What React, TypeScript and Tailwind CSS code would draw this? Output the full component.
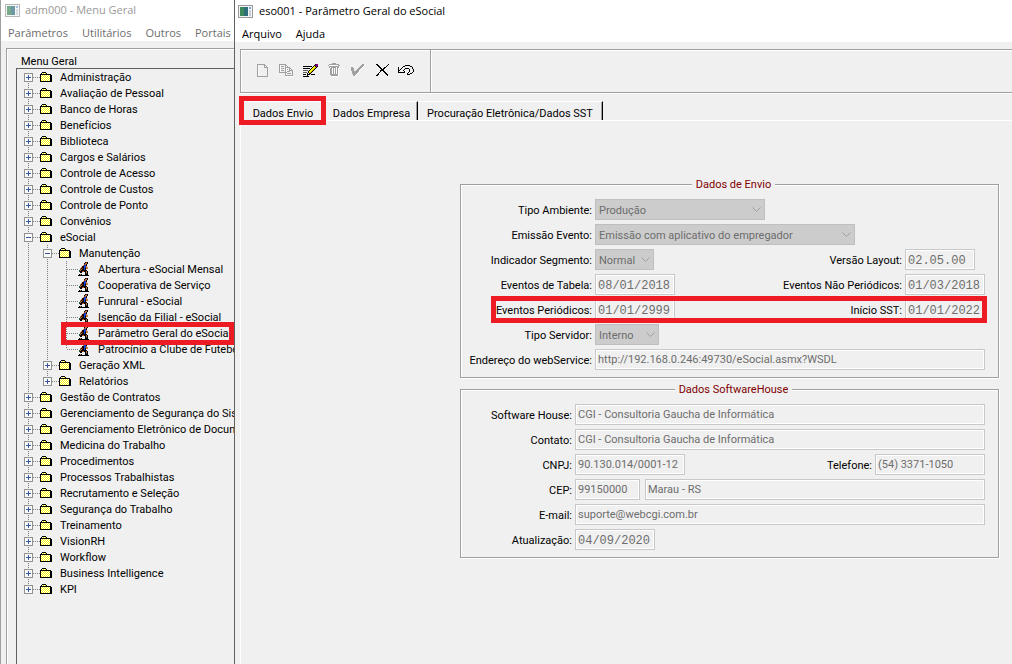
import { useState } from 'react'
import type { ReactNode } from 'react'
import clsx from 'clsx'

const PALETTE: Record<string, string> = {
  k: '#000000',
  g: '#a0a0a0',
  d: '#606060',
  w: '#ffffff',
  y: '#ffff00',
  e: '#c8b400',
  o: '#c87840',
  b: '#1040d0',
  r: '#a02010',
  n: '#205030',
  m: '#800080',
}

const FOLDER = [
  '..kkkk......',
  '.kwywyk.....',
  'kkkkkkkkkkk.',
  'kwywywywywkk',
  'kywywywywykk',
  'kwywywywywkk',
  'kywywywywykk',
  'kwywywywywkk',
  'kywywywywykk',
  'kkkkkkkkkkkk',
]

const RUNNER = [
  '.......krk..',
  '......kook..',
  '......rok...',
  '.....obbk...',
  '....kkbbo...',
  '...okkbboo..',
  '..okrkbkoo..',
  '..nokkbk....',
  '.nokkkkkk...',
  '.nkkrokkok..',
  '..kk...kok..',
  '.......knk..',
  '.kok...kkk..',
  'kkkkkkkkkkk.',
]

const ICON_NEW = [
  'gggggggg...',
  'gw.....gg..',
  'gw.....gwg.',
  'gw.....gggg',
  'gw........g',
  'gw........g',
  'gw........g',
  'gw........g',
  'gw........g',
  'gw........g',
  'gw........g',
  'gw........g',
  'ggggggggggg',
]

const ICON_COPY = [
  'ggggggg........',
  'gw....gg.......',
  'gwggg.gwg......',
  'gw....ggggg....',
  'gwggg.gw..gg...',
  'gw....gwg.gwg..',
  'gwggg.gw..gggg.',
  'gw....gwggg..g.',
  'ggggggggw....g.',
  '......gwgggg.g.',
  '......gw.....g.',
  '......gggggggg.',
  '.......wwwwwww.',
]

const ICON_EDIT = [
  '............kmm',
  '...........kmmm',
  'kkkkkkkkk.kykmk',
  '.........kyyek.',
  'kkkkkkk.kyyek..',
  '.......kyyek...',
  'ddddd.kyyek....',
  '.....kyyek.....',
  'dddd.kyek......',
  '....kwkk.......',
  'kkk.kkk.kkkk...',
  '....k..........',
  'kkkkkk.........',
]

const ICON_TRASH = [
  '....gggg.....',
  '.gggggggggg..',
  'gwwwwwwwwwgg.',
  '.ggggggggggw.',
  '.gwgggggwggw.',
  '..ggwgwgwgw..',
  '..ggwgwgwgw..',
  '..ggwgwgwgw..',
  '..ggwgwgwgw..',
  '..ggwgwgwgw..',
  '..ggwgwgwgw..',
  '..ggggggggw..',
  '...gggggggw..',
  '....wwwwww...',
]

const ICON_CHECK = [
  '...........gg.',
  '..........gggw',
  '.........gggw.',
  'gg......gggw..',
  'ggg....gggw...',
  'ggg...gggw....',
  'ggg..gggw.....',
  '.gggggggw.....',
  '.ggggggw......',
  '.gggggw.......',
  '..gggw........',
  '..ggw.........',
]

const ICON_CANCEL = [
  'kk..........k',
  '.kk........k.',
  '..kk......k..',
  '...kk...kk...',
  '....kk.kk....',
  '.....kkk.....',
  '....kkkk.....',
  '....k..kk....',
  '...k....kk...',
  '..k......kk..',
  '.kk.......kk.',
  'kk.........k.',
]

const ICON_UNDO = [
  '.......kkkkk....',
  '.....kk.....kk..',
  'k...k.........k.',
  'k..k...kkkk...k.',
  'k.k...k....k...k',
  'kk...k.....k...k',
  'k.....k....k...k',
  'kkkkkkk...k...k.',
  '.........k..kk..',
  '.........kkk....',
]

function PixelIcon({ rows, className }: { rows: string[]; className?: string }) {
  const w = Math.max(...rows.map(r => r.length))
  return (
    <svg width={w} height={rows.length} shapeRendering="crispEdges" className={className} aria-hidden="true">
      {rows.map((row, y) =>
        row.split('').map((c, x) =>
          c === '.' ? null : <rect key={`${x}-${y}`} x={x} y={y} width="1" height="1" fill={PALETTE[c]} />
        )
      )}
    </svg>
  )
}

function WindowIcon({ faded }: { faded?: boolean }) {
  return (
    <svg width="15" height="13" shapeRendering="crispEdges" className={clsx('shrink-0', faded && 'opacity-70')} aria-hidden="true">
      <rect width="15" height="13" fill="#9a9a9a" />
      <rect x="1" y="1" width="13" height="11" fill="#f4f4f4" />
      <rect x="2" y="2" width="8" height="9" fill="#2f6f7c" />
      <rect x="2" y="2" width="4" height="9" fill="#3d8a5c" />
      <rect x="11" y="2" width="2" height="2" fill="#7ba7d8" />
      <rect x="11" y="5" width="2" height="6" fill="#c8d0da" />
    </svg>
  )
}

type TreeNode = {
  label: string
  leaf?: boolean
  marked?: boolean
  children?: TreeNode[]
}

const TREE: TreeNode[] = [
  { label: 'Administração' },
  { label: 'Avaliação de Pessoal' },
  { label: 'Banco de Horas' },
  { label: 'Benefícios' },
  { label: 'Biblioteca' },
  { label: 'Cargos e Salários' },
  { label: 'Controle de Acesso' },
  { label: 'Controle de Custos' },
  { label: 'Controle de Ponto' },
  { label: 'Convênios' },
  {
    label: 'eSocial',
    children: [
      {
        label: 'Manutenção',
        children: [
          { label: 'Abertura - eSocial Mensal', leaf: true },
          { label: 'Cooperativa de Serviço', leaf: true },
          { label: 'Funrural - eSocial', leaf: true },
          { label: 'Isenção da Filial - eSocial', leaf: true },
          { label: 'Parâmetro Geral do eSocial', leaf: true, marked: true },
          { label: 'Patrocínio a Clube de Futebol', leaf: true },
        ],
      },
      { label: 'Geração XML' },
      { label: 'Relatórios' },
    ],
  },
  { label: 'Gestão de Contratos' },
  { label: 'Gerenciamento de Segurança do Sistema' },
  { label: 'Gerenciamento Eletrônico de Documentos' },
  { label: 'Medicina do Trabalho' },
  { label: 'Procedimentos' },
  { label: 'Processos Trabalhistas' },
  { label: 'Recrutamento e Seleção' },
  { label: 'Segurança do Trabalho' },
  { label: 'Treinamento' },
  { label: 'VisionRH' },
  { label: 'Workflow' },
  { label: 'Business Intelligence' },
  { label: 'KPI' },
]

// one 19px column of the tree: dotted guides plus the +/- box
function Guide({ up, down, across, box }: { up?: boolean; down?: boolean; across?: boolean; box?: 'plus' | 'minus' }) {
  return (
    <svg width="19" height="16" shapeRendering="crispEdges" className="shrink-0" aria-hidden="true">
      <g stroke="#808080" strokeDasharray="1 1">
        {up && <line x1="7.5" y1="0" x2="7.5" y2="8" />}
        {down && <line x1="7.5" y1="8" x2="7.5" y2="16" />}
        {across && <line x1="8" y1="8.5" x2="19" y2="8.5" />}
      </g>
      {box && (
        <>
          <rect x="3.5" y="4.5" width="8" height="8" fill="#fafafa" stroke="#919191" />
          <line x1="5" y1="8.5" x2="10" y2="8.5" stroke="#3a56a0" />
          {box === 'plus' && <line x1="7.5" y1="6" x2="7.5" y2="11" stroke="#3a56a0" />}
        </>
      )}
    </svg>
  )
}

function Branch({ nodes, trail = [] }: { nodes: TreeNode[]; trail?: boolean[] }) {
  return (
    <ul>
      {nodes.map((n, i) => {
        const last = i === nodes.length - 1
        return (
          <li key={n.label}>
            <div className="relative flex h-4 items-center whitespace-nowrap">
              {trail.map((line, j) => (
                <Guide key={j} up={line} down={line} />
              ))}
              <Guide
                up={trail.length > 0 || i > 0}
                down={!last}
                across
                box={n.leaf ? undefined : n.children ? 'minus' : 'plus'}
              />
              <span className="w-5 shrink-0">
                <PixelIcon rows={n.leaf ? RUNNER : FOLDER} />
              </span>
              <span className="pt-0.5">{n.label}</span>
              {n.marked && (
                <span className="absolute -top-[3px] -bottom-1 right-0 left-10 z-10 border-5 border-[#ed1c24]" />
              )}
            </div>
            {n.children && <Branch nodes={n.children} trail={[...trail, !last]} />}
          </li>
        )
      })}
    </ul>
  )
}

function Field({ id, value, mono, className }: { id: string; value: string; mono?: boolean; className?: string }) {
  return (
    <input
      id={id}
      disabled
      defaultValue={value}
      className={clsx(
        'h-[21px] min-w-0 border border-[#c8c8c8] bg-[#f0f0f0] px-0.5 text-[#6d6d6d] shadow-[inset_0_0_0_1px_#fff]',
        mono && 'pt-0.5 font-["Liberation_Mono",monospace] text-xs',
        className
      )}
    />
  )
}

function Combo({ id, value, className }: { id: string; value: string; className?: string }) {
  return (
    <div className={clsx('relative', className)}>
      <select
        id={id}
        disabled
        className="block h-[21px] w-full appearance-none border border-[#bfbfbf] bg-[#cccccc] pt-0.5 pl-[3px] text-[#6d6d6d] opacity-100"
      >
        <option>{value}</option>
      </select>
      <svg width="9" height="5" className="pointer-events-none absolute top-2 right-1" aria-hidden="true">
        <path d="M0.5 0.5 L4.5 4.5 L8.5 0.5" fill="none" stroke="#a0a0a0" />
      </svg>
    </div>
  )
}

function Group({ title, children }: { title: string; children: ReactNode }) {
  return (
    <fieldset className="min-w-0 border border-[#a0a0a0] pb-[7px] pl-2 shadow-[1px_1px_0_#fff,inset_1px_1px_0_#fff]">
      <legend className="mx-auto bg-[#f0f0f0] px-1 pt-0.5 leading-4 text-[#800000]">{title}</legend>
      <div className="flex flex-col gap-1 pt-[6px] pr-[13px]">{children}</div>
    </fieldset>
  )
}

function Row({ htmlFor, label, narrow, children }: { htmlFor: string; label: string; narrow?: boolean; children: ReactNode }) {
  return (
    <div className="relative flex items-center gap-[3px] whitespace-nowrap">
      <label htmlFor={htmlFor} className={clsx('shrink-0 pt-0.5 text-right', narrow ? 'w-[103px]' : 'w-[123px]')}>
        {label}
      </label>
      {children}
    </div>
  )
}

const TOOLS = [
  { name: 'Novo', rows: ICON_NEW, off: true },
  { name: 'Copiar', rows: ICON_COPY, off: true },
  { name: 'Editar', rows: ICON_EDIT },
  { name: 'Excluir', rows: ICON_TRASH, off: true },
  { name: 'Confirmar', rows: ICON_CHECK, off: true },
  { name: 'Cancelar', rows: ICON_CANCEL },
  { name: 'Desfazer', rows: ICON_UNDO },
]

const TABS = [
  { label: 'Dados Envio', width: 'w-[86px]' },
  { label: 'Dados Empresa', width: 'w-[92px]' },
  { label: 'Procuração Eletrônica/Dados SST', width: 'w-[185px]' },
]

export default function App() {
  const [tab, setTab] = useState(0)

  return (
    <div className="flex min-h-screen bg-[#f0f0f0] font-[Roboto,sans-serif] text-[11px] leading-4 text-black">
      {/* Menu Geral */}
      <aside className="flex w-[234px] shrink-0 flex-col overflow-hidden border-l border-[#a0a0a0]">
        <header className='h-[41px] bg-white font-["Open_Sans",sans-serif] text-[#6d6d6d]'>
          <div className="flex h-5 items-center gap-[5px] pl-1 text-[#999999]">
            <WindowIcon faded />
            <span>adm000 - Menu Geral</span>
          </div>
          <nav className="flex gap-3.5 pt-[5px] pl-[7px]">
            <button>Parâmetros</button>
            <button>Utilitários</button>
            <button>Outros</button>
            <button>Portais</button>
          </nav>
        </header>
        <div className="mt-[7px] ml-[5px] flex grow flex-col border-t border-l border-[#a0a0a0] shadow-[inset_1px_1px_0_#fff]">
          <h2 className="h-[19px] pt-[5px] pl-[14px]">Menu Geral</h2>
          <div className="ml-[9px] grow border-t border-l border-[#606060] pl-1">
            <Branch nodes={TREE} />
          </div>
        </div>
      </aside>

      {/* Parâmetro Geral */}
      <main className="flex min-w-0 grow flex-col border-l border-[#606060]">
        <header className='h-[42px] bg-white font-["Open_Sans",sans-serif]'>
          <div className="flex h-[22px] items-center gap-1.5 pl-[3px]">
            <WindowIcon />
            <span>eso001 - Parâmetro Geral do eSocial</span>
          </div>
          <nav className="flex gap-3.5 pt-1 pl-[7px]">
            <button>Arquivo</button>
            <button>Ajuda</button>
          </nav>
        </header>

        <div className="mt-[7px] ml-[5px] flex h-11 border-y border-l border-[#a0a0a0] shadow-[inset_1px_1px_0_#fff,0_1px_0_#fff]">
          <div className="flex w-[190px] items-center border-r border-[#a0a0a0] pb-0.5 pl-[9px] shadow-[1px_0_0_#fff]">
            {TOOLS.map(t => (
              <button key={t.name} aria-label={t.name} disabled={t.off} className="flex h-6 w-6 items-center justify-center">
                <PixelIcon rows={t.rows} />
              </button>
            ))}
          </div>
        </div>

        <div role="tablist" className="mt-2 ml-[5px] flex">
          {TABS.map((t, i) => (
            <button
              key={t.label}
              role="tab"
              aria-selected={tab === i}
              onClick={() => setTab(i)}
              className={clsx(
                'relative h-[19px] border-t border-t-white pt-1 whitespace-nowrap',
                t.width,
                i > 0 && 'border-r border-r-black shadow-[inset_-1px_0_0_#a0a0a0]'
              )}
            >
              {t.label}
              {i === 0 && <span className="absolute -top-1.5 right-0 -bottom-[5px] -left-px z-10 border-5 border-[#ed1c24]" />}
            </button>
          ))}
        </div>

        <section role="tabpanel" className="ml-[5px] grow border-t border-l border-white">
          <div className="mt-[54px] mr-[13px] ml-auto flex max-w-[539px] flex-col gap-0.5">
            <Group title="Dados de Envio">
              <Row htmlFor="ambiente" label="Tipo Ambiente:">
                <Combo id="ambiente" value="Produção" className="w-[170px]" />
              </Row>
              <Row htmlFor="emissao" label="Emissão Evento:">
                <Combo id="emissao" value="Emissão com aplicativo do empregador" className="w-[260px]" />
              </Row>
              <Row htmlFor="segmento" label="Indicador Segmento:">
                <Combo id="segmento" value="Normal" className="w-[59px]" />
                <label htmlFor="versao" className="ml-auto pt-0.5">Versão Layout:</label>
                <div className="flex w-20">
                  <Field id="versao" value="02.05.00" mono className="w-[70px]" />
                </div>
              </Row>
              <Row htmlFor="tabela" label="Eventos de Tabela:">
                <Field id="tabela" value="08/01/2018" mono className="w-20" />
                <label htmlFor="naoPeriodicos" className="ml-auto pt-0.5">Eventos Não Periódicos:</label>
                <Field id="naoPeriodicos" value="01/03/2018" mono className="w-20" />
              </Row>
              <Row htmlFor="periodicos" label="Eventos Periódicos:">
                <Field id="periodicos" value="01/01/2999" mono className="w-20" />
                <label htmlFor="sst" className="ml-auto pt-0.5">Início SST:</label>
                <Field id="sst" value="01/01/2022" mono className="w-20" />
                <span className="absolute -inset-y-[3px] -right-0.5 left-[22px] border-5 border-[#ed1c24]" />
              </Row>
              <Row htmlFor="servidor" label="Tipo Servidor:">
                <Combo id="servidor" value="Interno" className="w-16" />
              </Row>
              <Row htmlFor="webservice" label="Endereço do webService:">
                <Field id="webservice" value="http://192.168.0.246:49730/eSocial.asmx?WSDL" className="grow" />
              </Row>
            </Group>

            <Group title="Dados SoftwareHouse">
              <Row htmlFor="house" label="Software House:" narrow>
                <Field id="house" value="CGI - Consultoria Gaucha de Informática" className="grow" />
              </Row>
              <Row htmlFor="contato" label="Contato:" narrow>
                <Field id="contato" value="CGI - Consultoria Gaucha de Informática" className="grow" />
              </Row>
              <Row htmlFor="cnpj" label="CNPJ:" narrow>
                <Field id="cnpj" value="90.130.014/0001-12" className="w-[110px]" />
                <label htmlFor="telefone" className="ml-auto pt-0.5">Telefone:</label>
                <Field id="telefone" value="(54) 3371-1050" className="w-[110px]" />
              </Row>
              <Row htmlFor="cep" label="CEP:" narrow>
                <Field id="cep" value="99150000" className="w-[65px]" />
                <Field id="cidade" value="Marau - RS" className="ml-0.5 grow" />
              </Row>
              <Row htmlFor="email" label="E-mail:" narrow>
                <Field id="email" value="suporte@webcgi.com.br" className="grow" />
              </Row>
              <Row htmlFor="atualizacao" label="Atualização:" narrow>
                <Field id="atualizacao" value="04/09/2020" mono className="w-20" />
              </Row>
            </Group>
          </div>
        </section>
      </main>
    </div>
  )
}
